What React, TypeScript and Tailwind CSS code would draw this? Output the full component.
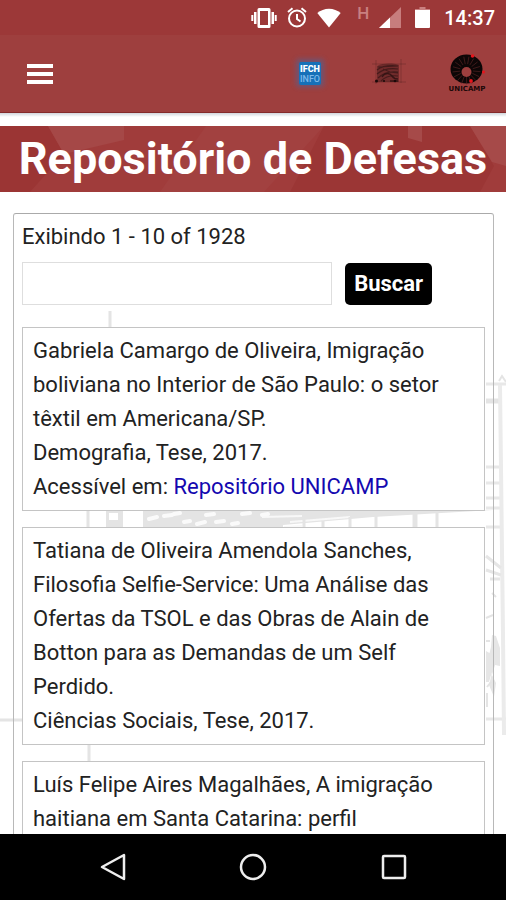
import { useState } from "react";

type Thesis = {
  title: string;
  info: string;
  link?: string;
};

const theses: Thesis[] = [
  {
    title: "Gabriela Camargo de Oliveira, Imigração boliviana no Interior de São Paulo: o setor têxtil em Americana/SP.",
    info: "Demografia, Tese, 2017.",
    link: "Repositório UNICAMP",
  },
  {
    title:
      "Tatiana de Oliveira Amendola Sanches, Filosofia Selfie-Service: Uma Análise das Ofertas da TSOL e das Obras de Alain de Botton para as Demandas de um Self Perdido.",
    info: "Ciências Sociais, Tese, 2017.",
  },
  {
    title: "Luís Felipe Aires Magalhães, A imigração haitiana em Santa Catarina: perfil",
    info: "",
  },
];

function StatusBar() {
  return (
    <div className="flex h-[35px] shrink-0 items-center justify-end bg-[#9c3838] pr-[11px] text-white">
      <div className="flex items-center gap-[10px]">
        <svg width="26" height="20" viewBox="0 0 26 20" fill="currentColor">
          <path fillRule="evenodd" d="M8 0h10a1.500 1.500 0 0 1 1.500 1.500v17A1.500 1.500 0 0 1 18 20H8a1.500 1.500 0 0 1-1.500-1.500v-17A1.500 1.500 0 0 1 8 0zM9 3v14h8V3z" />
          <path d="M3 4h2.500v12H3zM20.500 4H23v12h-2.500zM.3 7h2v6h-2zM23.700 7h2v6h-2z" />
        </svg>
        <svg width="20" height="21" viewBox="0 0 20 21" fill="none" stroke="currentColor" strokeWidth="2">
          <circle cx="10" cy="11.500" r="8" />
          <path d="M10 7v5l3.500 2.500M1 5l4.500-3.700M19 5l-4.500-3.700" />
        </svg>
        <svg width="24" height="20" viewBox="0 0 24 20" fill="currentColor">
          <path d="M12 19.500.3 5C3.500 2.300 7.500.7 12 .7S20.500 2.300 23.700 5z" />
        </svg>
      </div>
      <span className="ml-4 pb-[9px] text-[17px] leading-[18px] font-medium text-[#c98080]">H</span>
      <svg className="ml-[10px]" width="22" height="21" viewBox="0 0 22 21">
        <path d="M22 0v21H0z" fill="#c77d7d" />
        <path d="M11 10.500V21H0z" fill="#fff" />
      </svg>
      <svg className="ml-[14px]" width="15" height="21" viewBox="0 0 15 21">
        <path d="M4.500 0h6v2H15v2H0V2h4.500z" fill="#c98080" />
        <path d="M0 3h15v17a1 1 0 0 1-1 1H1a1 1 0 0 1-1-1z" fill="#fff" />
      </svg>
      <span className="ml-[14px] text-[20px] leading-[24px] font-medium">14:37</span>
    </div>
  );
}

function IfchLogo() {
  return (
    <svg width="40" height="44" viewBox="0 0 40 44">
      <defs>
        <filter id="glow" x="-50%" y="-50%" width="200%" height="200%">
          <feGaussianBlur stdDeviation="2.500" />
        </filter>
      </defs>
      <rect x="6" y="7" width="28" height="28" rx="3" fill="#5d5c86" opacity=".75" filter="url(#glow)" />
      <rect x="9" y="10" width="22" height="23" rx="2" fill="#1670b8" />
      <g fontFamily="Roboto, sans-serif" fontWeight="900" fontSize="9" textAnchor="middle">
        <text x="20" y="20" fill="#fff">IFCH</text>
        <text x="20" y="29.500" fill="#7db9ea" fontWeight="500">INFO</text>
      </g>
    </svg>
  );
}

function SketchLogo() {
  return (
    <svg width="40" height="44" viewBox="0 0 40 44" fill="none" stroke="#2a1010">
      <path d="M4 12h34M8 8v24M33 7v24M4 30h34" strokeWidth=".6" opacity=".4" />
      <path d="M9 14c6-3 15-3 22-1v17H9z" fill="#2a1010" fillOpacity=".4" stroke="none" />
      <path d="M9 18c5-4 12-5 21-4M9 22c6-5 13-6 21-5M10 26c5-5 12-7 20-6M13 29c4-4 9-6 17-5M10 15l20-1M15 17l7 3 8 1" strokeWidth="1.200" opacity=".6" />
      <path d="M14 25c3-5 8-4 10-1s4 3 6 3M22 29h8" strokeWidth="1.400" opacity=".8" />
      <g fill="#1a0808" stroke="none">
        <circle cx="8.500" cy="29" r="1.500" />
        <circle cx="16" cy="29" r="1" />
        <circle cx="27" cy="29" r="1.300" />
      </g>
    </svg>
  );
}

function UnicampLogo() {
  const rays = Array.from({ length: 17 }, (_, i) => (i * 360) / 17 + 10);
  return (
    <svg width="42" height="44" viewBox="0 0 42 44">
      <ellipse cx="20.500" cy="17" rx="16" ry="14.500" fill="#0c0606" />
      <g stroke="#5a2424" strokeWidth=".6">
        {rays.map((a) => (
          <path key={a} d="M20.500 12V4.500" transform={`rotate(${a} 20.500 18.500)`} />
        ))}
      </g>
      <circle cx="20.500" cy="20" r="5" fill="#9e3f3e" />
      <g fill="#e8141c">
        <circle cx="26.500" cy="4" r="1.800" />
        <circle cx="37.500" cy="20" r="1.500" />
        <circle cx="25" cy="29" r="1.900" />
      </g>
      <text x="21" y="38.500" textAnchor="middle" fontFamily="'DejaVu Sans', sans-serif" fontWeight="700" fontSize="7" fill="#1a0808">
        UNICAMP
      </text>
    </svg>
  );
}

function AppBar() {
  return (
    <header className="flex h-[78px] shrink-0 items-center justify-between border-b border-[#842a2a] bg-[#9e3f3e] pr-[18px] pl-[27px]">
      <button type="button" aria-label="Menu" className="flex w-[26px] flex-col gap-1">
        <span className="h-[4px] bg-white" />
        <span className="h-[4px] bg-white" />
        <span className="h-[4px] bg-white" />
      </button>
      <nav className="flex items-center gap-[38px]">
        <a href="#info" aria-label="IFCH Info"><IfchLogo /></a>
        <a href="#ifch" aria-label="IFCH"><SketchLogo /></a>
        <a href="#unicamp" aria-label="Unicamp"><UnicampLogo /></a>
      </nav>
    </header>
  );
}

// faint architectural drawing behind the list
function Backdrop() {
  return (
    <svg className="absolute inset-x-0 top-0 w-full" viewBox="0 0 506 721" fill="none" stroke="#e4e4e4" strokeWidth="2">
      <path d="M110 198v20M88 396v20M89 632v20M0 607h24" strokeWidth="3" />
      <path d="M106 397h17v20h-17zM109 400v7h9v-7z" fill="#e4e4e4" fillRule="evenodd" stroke="none" />
      <path d="M143 397h350l-120 7-90 8v5H143z" fill="#e4e4e4" stroke="none" />
      <path d="M149 406l8-2M164 403l8-1M184 409l6-1M197 411l8-2M216 409l8-1M232 411l6-1M206 402l8-1M242 401l8-1M262 402l6-1M174 401l6-1" stroke="#fafafa" strokeWidth="4" strokeLinecap="round" />
      <path d="M262 404l40-1M290 409l60-5M284 414l18-1" stroke="#f8f8f8" strokeWidth="2" />
      <path d="M304 405v12M323 408v10M350 404v14M376 403v15M437 399v19" strokeWidth="3" />
      <path d="M415 400v18" strokeWidth="5" />
      <path d="M486 271h20M486 354h14M486 370h14M486 385h14M486 395h14M486 414h14M486 606h20" stroke="#e8e8e8" strokeWidth="3" />
      <path d="M486 288h14" strokeWidth="5" />
      <path d="M499 268l3-5 4 6" />
      <path d="M500 272l3 250 1 100" stroke="#ebebeb" strokeWidth="4" />
      <path d="M486 443l15 12M486 457l15 5M490 466h10" stroke="#e6e6e6" strokeWidth="3" />
      <path d="M492 480l4 4M486 505l7-3M486 528h4" />
      <path d="M486 538l5 3 1 18-3 10h-3zM492 522l4 1 4 12v18l-5-1-3 10 4 8-2 14-5-12 3-12-4-14 3-12z" fill="#e6e6e6" stroke="none" />
      <path d="M487 574l4-5M487 580v14" />
    </svg>
  );
}

function ThesisCard({ thesis }: { thesis: Thesis }) {
  return (
    <li className="border border-[#c4c4c4] bg-white px-[10px] py-[6px]">
      <p>{thesis.title}</p>
      {thesis.info && <p>{thesis.info}</p>}
      {thesis.link && (
        <p>
          Acessível em:{" "}
          <a href="#repositorio" className="text-[#1408b0]">
            {thesis.link}
          </a>
        </p>
      )}
    </li>
  );
}

function NavBar() {
  return (
    <div className="flex h-[66px] shrink-0 items-center justify-around bg-black px-[43px] text-[#eee]">
      <button type="button" aria-label="Voltar">
        <svg width="28" height="28" viewBox="0 0 28 28" fill="none" stroke="currentColor" strokeWidth="2.500" strokeLinejoin="round">
          <path d="M25 2v24L3 14z" />
        </svg>
      </button>
      <button type="button" aria-label="Início">
        <svg width="28" height="28" viewBox="0 0 28 28" fill="none" stroke="currentColor" strokeWidth="2.500">
          <circle cx="14" cy="14" r="12" />
        </svg>
      </button>
      <button type="button" aria-label="Recentes">
        <svg width="28" height="28" viewBox="0 0 28 28" fill="none" stroke="currentColor" strokeWidth="2.500">
          <rect x="4" y="3" width="22" height="22" rx="1" />
        </svg>
      </button>
    </div>
  );
}

export default function App() {
  const [query, setQuery] = useState("");

  return (
    <div className="flex h-screen flex-col bg-white font-[Roboto,sans-serif]">
      <StatusBar />
      <AppBar />

      <main className="relative flex-1 overflow-y-auto bg-white pt-[13px] [scrollbar-width:none]">
        <Backdrop />
        <div className="absolute inset-x-0 top-0 h-1 bg-gradient-to-b from-gray-300 to-white" />

        {/* Title */}
        <div className="relative overflow-hidden bg-[#a03c3b]">
          <svg className="absolute inset-0 h-full w-full" viewBox="0 0 506 66" preserveAspectRatio="none">
            <path d="M0 0h48l16 28L30 66H0z" fill="#9b3534" />
            <path d="M48 0h76v14L64 28z" fill="#a54847" />
            <path d="M206 0h118l-60 66H160z" fill="#a24140" />
            <path d="M324 0h84v10l14 6V0h48l24 40-14 26H290z" fill="#9b3635" />
            <path d="M408 0h14v16l-14-4zM470 0h36v40l-14-4z" fill="#a64a49" />
          </svg>
          <h1 className="relative text-center text-[45px] leading-[66px] font-bold whitespace-nowrap text-white">
            Repositório de Defesas
          </h1>
        </div>

        {/* List */}
        <section className="relative mr-3 ml-[13px] mt-[21px] rounded-[3px] border border-[#b8b8b8] border-t-[#aaa] px-2 pt-[6px] text-[22px] leading-[34px] text-[#222]">
          <p>Exibindo 1 - 10 of 1928</p>
          <form className="mt-2 flex items-center gap-[13px]" onSubmit={(e) => e.preventDefault()}>
            <input
              type="text"
              aria-label="Buscar"
              value={query}
              onChange={(e) => setQuery(e.target.value)}
              className="h-[43px] w-[67%] border border-[#dedede] bg-white px-2 outline-none"
            />
            <button type="submit" className="h-[42px] rounded-[5px] bg-black px-[9px] font-bold text-white">
              Buscar
            </button>
          </form>
          <ul className="mt-[22px] flex flex-col gap-4 pb-4">
            {theses.map((t) => (
              <ThesisCard key={t.title} thesis={t} />
            ))}
          </ul>
        </section>
      </main>

      <NavBar />
    </div>
  );
}
